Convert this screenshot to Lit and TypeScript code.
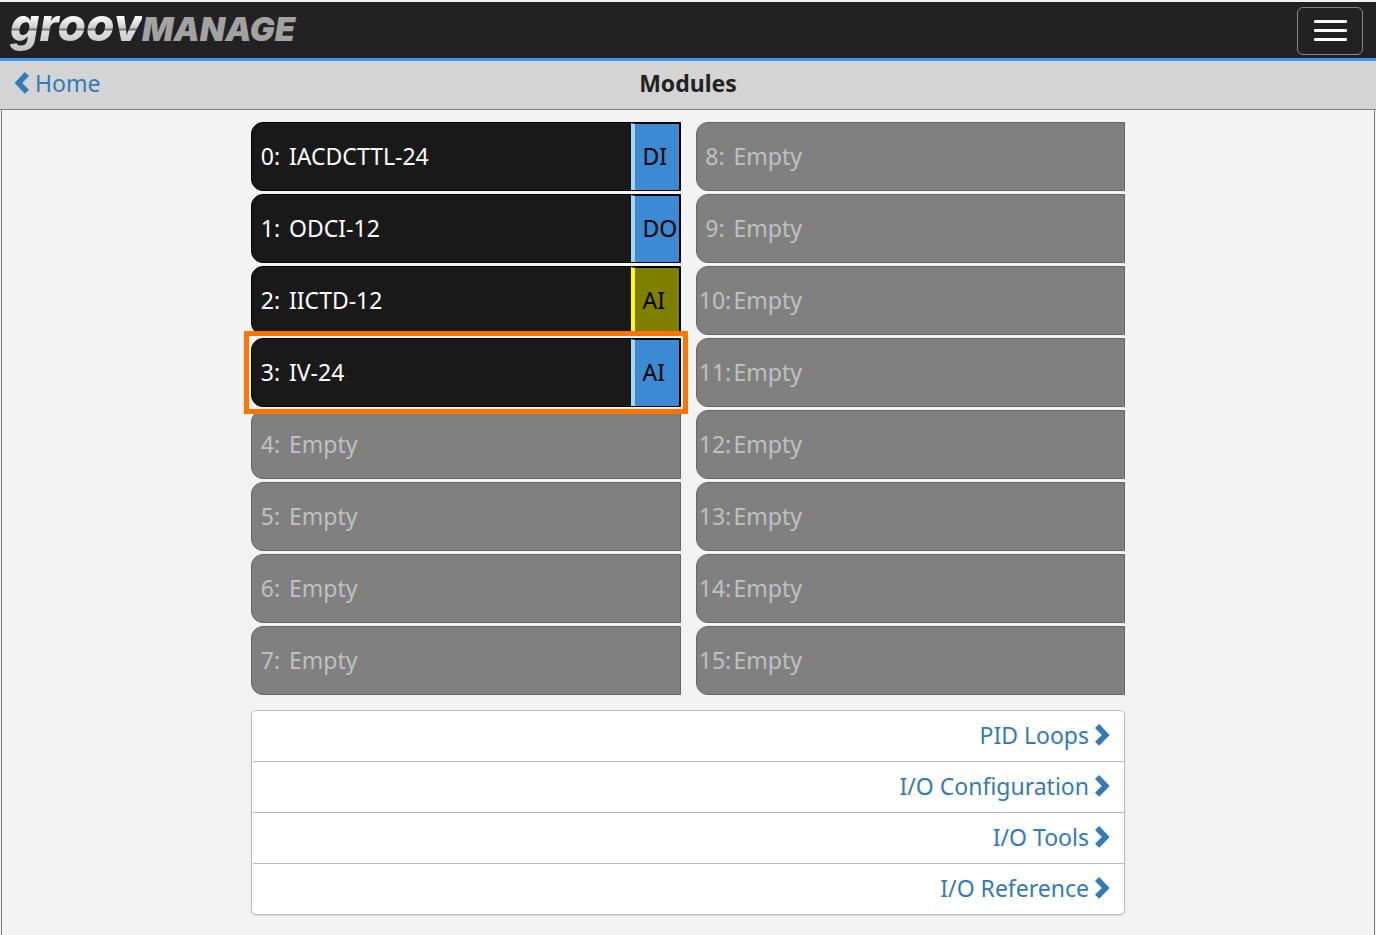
import { LitElement, html, css, nothing } from "lit";
import { customElement, property } from "lit/decorators.js";
import { classMap } from "lit/directives/class-map.js";

interface Module {
  slot: number;
  name?: string;
  type?: string;
  tone?: "blue" | "olive";
  selected?: boolean;
}

const installed: Module[] = [
  { slot: 0, name: "IACDCTTL-24", type: "DI", tone: "blue" },
  { slot: 1, name: "ODCI-12", type: "DO", tone: "blue" },
  { slot: 2, name: "IICTD-12", type: "AI", tone: "olive" },
  { slot: 3, name: "IV-24", type: "AI", tone: "blue", selected: true },
];

const modules: Module[] = Array.from(
  { length: 16 },
  (_, slot) => installed.find((m) => m.slot === slot) ?? { slot }
);

const links = ["PID Loops", "I/O Configuration", "I/O Tools", "I/O Reference"];

@customElement("module-row")
class ModuleRow extends LitElement {
  @property({ attribute: false }) module!: Module;

  static styles = css`
    :host {
      display: block;
      position: relative;
    }
    .row {
      box-sizing: border-box;
      display: flex;
      align-items: stretch;
      width: 100%;
      height: 69px;
      margin: 0;
      padding: 0;
      border: 1px solid #666;
      border-radius: 12px 0 0 12px;
      background: #808080;
      color: #c0c0c0;
      font: inherit;
      text-align: left;
    }
    .filled {
      border-color: #000;
      background: #191919;
      color: #fff;
    }
    .slot,
    .name,
    .badge {
      box-sizing: border-box;
      display: flex;
      align-items: center;
      padding-bottom: 2px;
    }
    .slot {
      flex: none;
      justify-content: center;
      width: 37px;
    }
    .name {
      flex: 1;
    }
    .badge {
      width: 49px;
      padding-left: 8px;
      border: 1px solid #000;
      border-width: 1px 1px 0 4px;
      color: #000;
    }
    .blue {
      background: #3c8ad2;
      border-left-color: #a6d3ff;
    }
    .olive {
      background: #808000;
      border-left-color: #ff0;
    }
    .marker {
      position: absolute;
      inset: -7px;
      border: 5px solid #ff7300;
      pointer-events: none;
      z-index: 1;
    }
  `;

  render() {
    const m = this.module;
    return html`
      <button
        class=${classMap({ row: true, filled: !!m.name })}
        type="button"
        ?disabled=${!m.name}
      >
        <span class="slot">${m.slot}:</span>
        <span class="name">${m.name ?? "Empty"}</span>
        ${m.type
          ? html`<span class="badge ${m.tone}">${m.type}</span>`
          : nothing}
      </button>
      ${m.selected ? html`<div class="marker"></div>` : nothing}
    `;
  }
}

@customElement("app-root")
class AppRoot extends LitElement {
  static styles = css`
    :host {
      display: flex;
      flex-direction: column;
      box-sizing: border-box;
      min-height: 100vh;
      background: #f3f3f3;
      font-family: "Noto Sans", "Open Sans", sans-serif;
      font-size: 23px;
      line-height: 30px;
      color: #222;
    }
    a {
      color: #337ab7;
      text-decoration: none;
    }
    .navbar {
      display: flex;
      align-items: center;
      justify-content: space-between;
      box-sizing: border-box;
      height: 61px;
      padding: 1px 13px 0 10px;
      border-top: 2px solid #f3f3f3;
      border-bottom: 3px solid #3d94f9;
      background: #222;
    }
    .logo {
      display: flex;
      align-items: baseline;
      font-family: Inter, sans-serif;
      font-style: italic;
      line-height: 40px;
    }
    .groov {
      padding-bottom: 14px;
      font-size: 46px;
      font-weight: 800;
      color: transparent;
      background: linear-gradient(
        #fff 12px,
        #ccc 24px,
        #777 25px,
        #777 26px,
        #ddd 27px,
        #c4c4c4 44px
      );
      background-clip: text;
      -webkit-background-clip: text;
    }
    .manage {
      font-size: 33px;
      font-weight: 900;
      color: #a2a2a2;
    }
    .menu {
      display: flex;
      flex-direction: column;
      align-items: center;
      justify-content: center;
      gap: 6px;
      box-sizing: border-box;
      width: 66px;
      height: 48px;
      padding: 0;
      border: 1px solid #888;
      border-radius: 6px;
      background: transparent;
    }
    .bar {
      width: 33px;
      height: 3px;
      border-radius: 1px;
      background: #fff;
    }
    .titlebar {
      display: grid;
      grid-template-columns: 1fr auto 1fr;
      align-items: center;
      box-sizing: border-box;
      height: 49px;
      padding: 0 14px 4px;
      border-bottom: 1px solid #808080;
      background: #d4d4d4;
    }
    .home {
      display: flex;
      align-items: center;
      gap: 6px;
    }
    .title {
      margin: 0;
      font-size: 23px;
      font-weight: 700;
    }
    .content {
      flex: 1;
      margin: 0 1px;
      padding: 12px 16px 20px;
      border: 1px solid #808080;
      border-width: 0 1px;
    }
    .inner {
      max-width: 874px;
      margin: 0 auto;
    }
    .modules {
      display: grid;
      grid-template-columns: 1fr 1fr;
      grid-template-rows: repeat(8, auto);
      grid-auto-flow: column;
      gap: 3px 15px;
    }
    .panel {
      margin-top: 15px;
      padding-left: 1px;
      border: 1px solid #bbb;
      border-radius: 5px;
      background: #fff;
      box-shadow: 0 1px 2px rgba(0, 0, 0, 0.1);
    }
    .link {
      display: flex;
      align-items: center;
      justify-content: flex-end;
      gap: 6px;
      height: 48px;
      padding: 0 14px 2px 0;
    }
    .link + .link {
      border-top: 1px solid #bbb;
    }
    .chevron {
      flex: none;
      width: 15px;
      height: 22px;
      fill: currentColor;
    }
  `;

  render() {
    return html`
      <header class="navbar">
        <div class="logo">
          <span class="groov">groov</span><span class="manage">MANAGE</span>
        </div>
        <button class="menu" type="button" aria-label="Menu">
          <span class="bar"></span><span class="bar"></span
          ><span class="bar"></span>
        </button>
      </header>
      <nav class="titlebar">
        <a class="home" href="#home">
          <svg class="chevron" viewBox="0 0 15 22" aria-hidden="true">
            <path d="M10.8 0 L15 4 L8.2 11 L15 17.8 L10.8 21.8 L0.6 11Z" />
          </svg>
          <span>Home</span>
        </a>
        <h1 class="title">Modules</h1>
      </nav>
      <main class="content">
        <div class="inner">
          <div class="modules">
            ${modules.map((m) => html`<module-row .module=${m}></module-row>`)}
          </div>
          <nav class="panel">
            ${links.map(
              (label) => html`<a class="link" href="#">
                <span>${label}</span>
                <svg class="chevron" viewBox="0 0 15 22" aria-hidden="true">
                  <path d="M4.2 0 L0 4 L6.8 11 L0 17.8 L4.2 21.8 L14.6 11Z" />
                </svg>
              </a>`
            )}
          </nav>
        </div>
      </main>
    `;
  }
}
